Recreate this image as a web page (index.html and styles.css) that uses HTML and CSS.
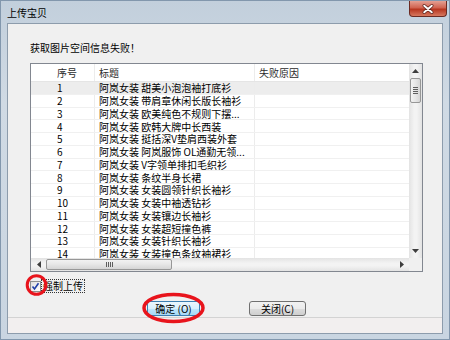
FILE: index.html
```html
<!DOCTYPE html>
<html lang="zh-CN">
<head>
    <meta charset="UTF-8">
    <title>上传宝贝</title>
    <link rel="stylesheet" href="styles.css">
</head>
<body>
    <div class="window">
        <div class="titlebar">
            <div class="title">上传宝贝</div>
            <div class="close">
                <svg width="38" height="16" viewBox="0 0 38 16">
                    <path d="M15 4.5 L23 11.5 M23 4.5 L15 11.5" stroke="#5b2119" stroke-width="3.6" stroke-linecap="round"/>
                    <path d="M15 4.5 L23 11.5 M23 4.5 L15 11.5" stroke="#fff" stroke-width="2" stroke-linecap="round"/>
                </svg>
            </div>
        </div>

        <div class="client">
            <div class="msg">获取图片空间信息失败！</div>

            <div class="list">
                <div class="view">
                    <div class="head">
                        <div class="col col-no">序号</div>
                        <div class="col col-title">标题</div>
                        <div class="col col-reason">失败原因</div>
                    </div>
                    <div class="row focus"><div class="col col-no">1</div><div class="col col-title">阿岚女装 甜美小泡泡袖打底衫</div><div class="col col-reason"></div></div>
                    <div class="row"><div class="col col-no">2</div><div class="col col-title">阿岚女装 带肩章休闲长版长袖衫</div><div class="col col-reason"></div></div>
                    <div class="row"><div class="col col-no">3</div><div class="col col-title">阿岚女装 欧美纯色不规则下摆...</div><div class="col col-reason"></div></div>
                    <div class="row"><div class="col col-no">4</div><div class="col col-title">阿岚女装 欧韩大牌中长西装</div><div class="col col-reason"></div></div>
                    <div class="row"><div class="col col-no">5</div><div class="col col-title">阿岚女装 挺括深V垫肩西装外套</div><div class="col col-reason"></div></div>
                    <div class="row"><div class="col col-no">6</div><div class="col col-title">阿岚女装 阿岚服饰 OL通勤无领...</div><div class="col col-reason"></div></div>
                    <div class="row"><div class="col col-no">7</div><div class="col col-title">阿岚女装 V字领单排扣毛织衫</div><div class="col col-reason"></div></div>
                    <div class="row"><div class="col col-no">8</div><div class="col col-title">阿岚女装 条纹半身长裙</div><div class="col col-reason"></div></div>
                    <div class="row"><div class="col col-no">9</div><div class="col col-title">阿岚女装 女装圆领针织长袖衫</div><div class="col col-reason"></div></div>
                    <div class="row"><div class="col col-no">10</div><div class="col col-title">阿岚女装 女装中袖透钻衫</div><div class="col col-reason"></div></div>
                    <div class="row"><div class="col col-no">11</div><div class="col col-title">阿岚女装 女装镶边长袖衫</div><div class="col col-reason"></div></div>
                    <div class="row"><div class="col col-no">12</div><div class="col col-title">阿岚女装 女装超短撞色裤</div><div class="col col-reason"></div></div>
                    <div class="row"><div class="col col-no">13</div><div class="col col-title">阿岚女装 女装针织长袖衫</div><div class="col col-reason"></div></div>
                    <div class="row"><div class="col col-no">14</div><div class="col col-title">阿岚女装 女装撞色条纹袖裙衫</div><div class="col col-reason"></div></div>
                </div>

                <div class="vscroll">
                    <div class="arrow">
                        <svg width="7" height="4" viewBox="0 0 7 4"><path d="M0 4 L3.5 0 L7 4 Z" fill="#3d3d3d"/></svg>
                    </div>
                    <div class="thumb-v">
                        <span></span><span></span><span></span><span></span>
                    </div>
                    <div class="track"></div>
                    <div class="arrow">
                        <svg width="7" height="4" viewBox="0 0 7 4"><path d="M0 0 L3.5 4 L7 0 Z" fill="#3d3d3d"/></svg>
                    </div>
                </div>

                <div class="hscroll">
                    <div class="arrow-h">
                        <svg width="4" height="7" viewBox="0 0 4 7"><path d="M4 0 L0 3.5 L4 7 Z" fill="#3d3d3d"/></svg>
                    </div>
                    <div class="thumb-h">
                        <span></span><span></span><span></span><span></span>
                    </div>
                    <div class="track"></div>
                    <div class="arrow-h">
                        <svg width="4" height="7" viewBox="0 0 4 7"><path d="M0 0 L4 3.5 L0 7 Z" fill="#3d3d3d"/></svg>
                    </div>
                </div>

                <div class="corner"></div>
            </div>

            <div class="opts">
                <div class="box">
                    <svg width="9" height="9" viewBox="0 0 9 9"><path d="M1.5 4.5 L3.5 7 L7.5 1.2" fill="none" stroke="#1f3fa8" stroke-width="1.6"/></svg>
                </div>
                <div class="label">强制上传</div>
            </div>

            <div class="btns">
                <button class="btn btn-ok">确定 (O)</button>
                <button class="btn btn-close">关闭(C)</button>
            </div>

            <div class="footer"></div>
        </div>
    </div>

    <!-- red marks drawn over the dialog -->
    <svg class="marks" width="450" height="340" viewBox="0 0 450 340">
        <circle cx="36.5" cy="285" r="9.3" fill="none" stroke="#e8141c" stroke-width="3"/>
        <ellipse cx="173.5" cy="308" rx="29.5" ry="13.5" fill="none" stroke="#e8141c" stroke-width="3.5"/>
    </svg>
</body>
</html>
```

FILE: styles.css
```css
* {
    box-sizing: border-box;
}
body {
    margin: 0;
    width: 450px;
    height: 340px;
    overflow: hidden;
    position: relative;
    font-family: "Noto Sans CJK SC", "Liberation Sans", sans-serif;
    font-size: 10px;
    color: #000;
}
.window {
    width: 450px;
    height: 340px;
    padding: 0 6px 5px 6px;
    display: flex;
    flex-direction: column;
    border: 1px solid #8297ad;
    background: linear-gradient(180deg, #c2cfdc 0%, #d0dae4 30%, #c9d5e1 100%);
}
.titlebar {
    height: 22px;
    display: flex;
    justify-content: space-between;
    align-items: flex-start;
}
.title {
    padding-top: 6px;
    line-height: 12px;
}
.close {
    width: 38px;
    height: 16px;
    margin-right: -4px;
    border: 1px solid #6b2a22;
    border-top: none;
    border-radius: 0 0 4px 4px;
    background: linear-gradient(180deg, #e4a093 0%, #d06350 45%, #b73620 55%, #d7785f 100%);
    display: flex;
}
.client {
    flex: 1;
    display: flex;
    flex-direction: column;
    background: #f0f0f0;
    border: 1px solid #8d9cac;
}
.msg {
    margin: 18px 0 0 22px;
    line-height: 12px;
}
.list {
    margin: 9px 0 0 22px;
    width: 393px;
    height: 209px;
    border: 1px solid #828790;
    background: #fff;
    display: grid;
    grid-template-columns: 1fr 13px;
    grid-template-rows: 1fr 13px;
}
.view {
    overflow: hidden;
}
.head {
    display: flex;
    height: 18px;
    border-bottom: 1px solid #e5e5e5;
    color: #2b2b2b;
}
.row {
    display: flex;
    height: 12.75px;
    border-bottom: 1px solid #f0f0f0;
}
.row.focus {
    background: #ededed;
}
.col {
    display: flex;
    align-items: center;
    line-height: 11px;
    white-space: nowrap;
}
.col-no {
    width: 64px;
    padding-left: 26px;
    border-right: 1px solid #ececec;
}
.col-title {
    width: 160px;
    padding-left: 4px;
    border-right: 1px solid #ececec;
}
.col-reason {
    flex: 1;
    padding-left: 4px;
}
.vscroll {
    display: flex;
    flex-direction: column;
    background: linear-gradient(90deg, #e3e3e3 0%, #f3f3f3 40%, #f3f3f3 60%, #e3e3e3 100%);
}
.hscroll {
    display: flex;
    background: linear-gradient(180deg, #e3e3e3 0%, #f3f3f3 40%, #f3f3f3 60%, #e3e3e3 100%);
}
.arrow {
    height: 14px;
    display: flex;
    align-items: center;
    justify-content: center;
}
.arrow-h {
    width: 15px;
    display: flex;
    align-items: center;
    justify-content: center;
}
.track {
    flex: 1;
}
.thumb-v {
    height: 25px;
    margin: 0 1px;
    border: 1px solid #979797;
    border-radius: 2px;
    background: linear-gradient(90deg, #f2f2f2 0%, #e6e6e6 50%, #d5d5d5 100%);
    display: flex;
    flex-direction: column;
    align-items: center;
    justify-content: center;
    gap: 1px;
}
.thumb-v span {
    width: 5px;
    height: 1px;
    background: #5e5e5e;
}
.thumb-h {
    width: 126px;
    margin: 1px 0;
    border: 1px solid #979797;
    border-radius: 2px;
    background: linear-gradient(180deg, #f2f2f2 0%, #e6e6e6 50%, #d5d5d5 100%);
    display: flex;
    align-items: center;
    justify-content: center;
    gap: 1px;
}
.thumb-h span {
    width: 1px;
    height: 5px;
    background: #5e5e5e;
}
.corner {
    background: #f0f0f0;
}
.opts {
    margin: 8px 0 0 22px;
    height: 12px;
    display: flex;
    align-items: center;
}
.box {
    width: 11px;
    height: 11px;
    border: 1px solid #8e8f8f;
    background: linear-gradient(135deg, #dedede 0%, #ffffff 100%);
    display: flex;
    align-items: center;
    justify-content: center;
}
.label {
    margin-left: 1px;
    padding: 0 1px;
    line-height: 12px;
    outline: 1px dotted #333;
}
.btns {
    margin: 9px 0 0 139px;
    display: flex;
    gap: 49px;
}
.btn {
    height: 15px;
    padding: 0;
    font-family: "Noto Sans CJK SC", "Liberation Sans", sans-serif;
    font-size: 10px;
    line-height: 12px;
    color: #000;
    border: 1px solid #707070;
    border-radius: 3px;
    background: linear-gradient(180deg, #f2f2f2 0%, #ebebeb 50%, #dddddd 51%, #cfcfcf 100%);
}
.btn-ok {
    width: 53px;
    border-color: #3c7fb1;
    background: linear-gradient(180deg, #eaf6fd 0%, #d9f0fc 50%, #bee6fd 51%, #a7d9f5 100%);
}
.btn-close {
    width: 57px;
}
.footer {
    flex: 1;
    margin-top: 1px;
    border-top: 1px solid #d3d3d3;
    background: #f2efef;
}
.marks {
    position: absolute;
    top: 0;
    left: 0;
    pointer-events: none;
}
```
